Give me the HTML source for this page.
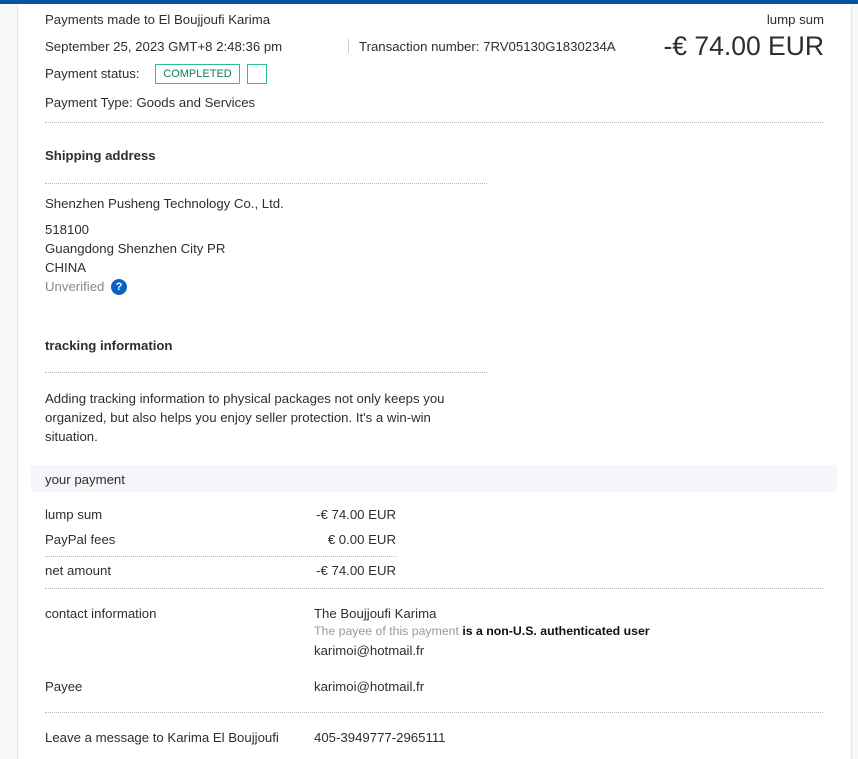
<!DOCTYPE html>
<html><head><style>
body{margin:0;width:858px;height:759px;background:#fff;font-family:"Liberation Sans",sans-serif;font-size:13.2px;color:#2c2e2f;position:relative;overflow:hidden}
.a{position:absolute;white-space:nowrap}
.hr{position:absolute;border-top:1px dotted #b8b8b8;height:0}
.b{font-weight:bold}
</style></head><body>
<div class="a" style="left:0;top:0;width:858px;height:4px;background:#0552a0"></div>
<div class="a" style="left:0;top:4px;width:17px;height:755px;background:#f7f8fa;border-right:1px solid #e3e5e8"></div>
<div class="a" style="left:851px;top:4px;width:7px;height:755px;background:#f7f8fa;border-left:1px solid #e3e5e8"></div>
<div class="a" style="left:45px;top:12px">Payments made to El Boujjoufi Karima</div>
<div class="a" style="right:34px;top:12px">lump sum</div>
<div class="a" style="left:45px;top:39px">September 25, 2023 GMT+8 2:48:36 pm</div>
<div class="a" style="left:348px;top:39px;width:1px;height:14px;background:#c8ccd5"></div>
<div class="a" style="left:359px;top:39px">Transaction number: 7RV05130G1830234A</div>
<div class="a" style="right:34px;top:31px;font-size:26.5px">-€ 74.00 EUR</div>
<div class="a" style="left:45px;top:66px">Payment status:</div>
<div class="a" style="left:155px;top:64px;width:83px;height:18px;border:1px solid #2dbf8f;color:#137a5a;font-size:11px;text-align:center;line-height:18px">COMPLETED</div>
<div class="a" style="left:247px;top:64px;width:18px;height:18px;border:1px solid #2dbf8f"></div>
<div class="a" style="left:45px;top:95px">Payment Type: Goods and Services</div>
<div class="hr" style="left:45px;top:122px;width:778px"></div>
<div class="a b" style="left:45px;top:148px">Shipping address</div>
<div class="hr" style="left:45px;top:183px;width:442px"></div>
<div class="a" style="left:45px;top:196px">Shenzhen Pusheng Technology Co., Ltd.</div>
<div class="a" style="left:45px;top:222px">518100</div>
<div class="a" style="left:45px;top:241px">Guangdong Shenzhen City PR</div>
<div class="a" style="left:45px;top:260px">CHINA</div>
<div class="a" style="left:45px;top:279px;color:#888">Unverified</div>
<div class="a" style="left:111px;top:279px;width:16px;height:16px;border-radius:50%;background:#0b63c1;color:#fff;font-size:11px;font-weight:bold;text-align:center;line-height:16px">?</div>
<div class="a b" style="left:45px;top:338px">tracking information</div>
<div class="hr" style="left:45px;top:372px;width:442px"></div>
<div class="a" style="left:45px;top:389px;line-height:19px;white-space:normal;width:440px">Adding tracking information to physical packages not only keeps you organized, but also helps you enjoy seller protection. It's a win-win situation.</div>
<div class="a" style="left:31px;top:465px;width:806px;height:27px;background:#f5f6f9"></div>
<div class="a" style="left:45px;top:472px">your payment</div>
<div class="a" style="left:45px;top:507px">lump sum</div>
<div class="a" style="left:300px;top:507px;width:96px;text-align:right">-€ 74.00 EUR</div>
<div class="a" style="left:45px;top:532px">PayPal fees</div>
<div class="a" style="left:300px;top:532px;width:96px;text-align:right">€ 0.00 EUR</div>
<div class="hr" style="left:45px;top:556px;width:351px"></div>
<div class="a" style="left:45px;top:563px">net amount</div>
<div class="a" style="left:300px;top:563px;width:96px;text-align:right">-€ 74.00 EUR</div>
<div class="hr" style="left:45px;top:588px;width:778px"></div>
<div class="a" style="left:45px;top:606px">contact information</div>
<div class="a" style="left:314px;top:606px">The Boujjoufi Karima</div>
<div class="a" style="left:314px;top:624px;font-size:12.3px"><span style="color:#999">The payee of this payment</span> <span class="b" style="color:#111">is a non-U.S. authenticated user</span></div>
<div class="a" style="left:314px;top:643px">karimoi@hotmail.fr</div>
<div class="a" style="left:45px;top:679px">Payee</div>
<div class="a" style="left:314px;top:679px">karimoi@hotmail.fr</div>
<div class="hr" style="left:45px;top:712px;width:778px"></div>
<div class="a" style="left:45px;top:730px">Leave a message to Karima El Boujjoufi</div>
<div class="a" style="left:314px;top:730px">405-3949777-2965111</div>
</body></html>
